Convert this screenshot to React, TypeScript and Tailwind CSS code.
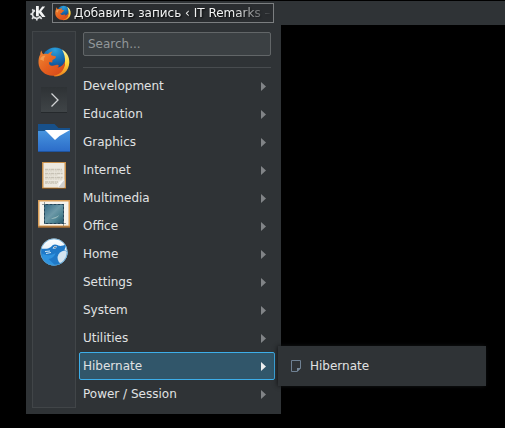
import React from "react";

const categories: string[] = [
  "Development",
  "Education",
  "Graphics",
  "Internet",
  "Multimedia",
  "Office",
  "Home",
  "Settings",
  "System",
  "Utilities",
  "Hibernate",
  "Power / Session",
];

function KdeLogo() {
  return (
    <svg viewBox="0 0 16 16" className="size-4" aria-hidden="true">
      <path d="M5 5.300A4.200 4.200 0 1 0 10.200 11.300" fill="none" stroke="#dfe1e2" strokeWidth="1.800" />
      <path d="M3.600 5.800L2.200 4.400M2.600 9.200H.4M3.600 12.200L2 13.800M6.800 13v2.500M10 12.200l1.700 1.700" stroke="#dfe1e2" strokeWidth="1.700" />
      <path d="M6 1h2.800v5l3.400-4.500h3L11.200 6.300l4.300 5.700h-3.300L8.800 7.500v3.700H6z" fill="#f4f5f5" />
    </svg>
  );
}

function Firefox({ className, id }: { className: string; id: string }) {
  return (
    <svg viewBox="0 0 32 32" className={className} aria-hidden="true">
      <defs>
        <radialGradient id={`${id}-globe`} cx="0.5" cy="0.1" r="0.9">
          <stop offset="0" stopColor="#2ba0dc" />
          <stop offset="0.5" stopColor="#1467ad" />
          <stop offset="1" stopColor="#10346f" />
        </radialGradient>
        <linearGradient id={`${id}-fox`} x1="0" y1="0" x2="1" y2="1">
          <stop offset="0" stopColor="#f08a35" />
          <stop offset="0.5" stopColor="#e5601f" />
          <stop offset="1" stopColor="#d4451b" />
        </linearGradient>
        <linearGradient id={`${id}-tail`} x1="0" y1="0" x2="0" y2="1">
          <stop offset="0" stopColor="#fff6a8" />
          <stop offset="0.5" stopColor="#ffd83c" />
          <stop offset="1" stopColor="#ee7f1c" />
        </linearGradient>
      </defs>
      <circle cx="17" cy="14.500" r="13" fill={`url(#${id}-globe)`} />
      <path d="M24 3.500c5 3 7.500 7.500 7.300 13C31 25 24.500 30.500 16.500 30.500l-2-3c8 0 12-5 12.500-11 .3-5-.500-8.500-3-13z" fill={`url(#${id}-tail)`} />
      <path d="M3.500 4.500c.2 1.500.8 3 1.800 3.800 1.500-.6 3-.6 4.700-.2 1.300-1.700 3-2.600 5-2.700-1.400 1-2 2.300-1.900 3.700.8.900 2.800.9 4.900 1.300.3 1.600-1.700 2.300-3.500 3.700l-.2 2.400-3-.6c-.8 2 .7 4 3.500 3.900 2.200-.1 3.200-1.600 5.400-.8 1.200.5.300 1.800-.8 2.500 4.100-.5 6.600-3.500 7.600-6.500.5 8-4 13.500-11 14.800C8 30.500.8 24.500.5 17 .4 13 1 10.500 2.300 8.500c0-1.400.4-3 1.200-4z" fill={`url(#${id}-fox)`} />
      <path d="M2 13.500c1-3.300 3-4.200 5.500-3.700-1.400 1.400-2 3.300-1.700 5.400-1.400-.9-2.500-1.400-3.800-1.700z" fill="#f29d52" />
    </svg>
  );
}

function Terminal() {
  return (
    <svg viewBox="0 0 32 32" className="size-8" aria-hidden="true">
      <defs>
        <linearGradient id="term" x1="0" y1="0" x2="0" y2="1">
          <stop offset="0" stopColor="#2e3235" />
          <stop offset="1" stopColor="#404548" />
        </linearGradient>
      </defs>
      <rect x="3" y="3" width="26" height="26" fill="url(#term)" />
      <path d="M3 28.500h26" stroke="#25292c" />
      <path d="M13.500 9.500l6.500 6.500-6.500 6.500" fill="none" stroke="#d2d4d5" strokeWidth="1.300" />
    </svg>
  );
}

function Folder() {
  return (
    <svg viewBox="0 0 32 32" className="size-8" aria-hidden="true">
      <defs>
        <linearGradient id="folder" x1="0" y1="0" x2="0" y2="1">
          <stop offset="0" stopColor="#4896e0" />
          <stop offset="1" stopColor="#2b6bc8" />
        </linearGradient>
      </defs>
      <path d="M0 2h16.500l4 4H32v11H0z" fill="#17508a" />
      <path d="M0 9h6.500l1-1H32v22H0z" fill="url(#folder)" />
      <path d="M0 29.500h32" stroke="#1f55a1" />
      <path d="M7 8h25l-10.500 6-4.500 4z" fill="#fff" />
    </svg>
  );
}

function Note() {
  return (
    <svg viewBox="0 0 32 32" className="size-8" aria-hidden="true">
      <rect x="4" y="2" width="24" height="27" fill="#c9914c" />
      <rect x="5.500" y="3" width="21" height="24.500" fill="#ece8df" />
      <path d="M4 28.500h24" stroke="#795225" />
      <path d="M7 9.500h17M7 13.500h18M7 17.500h18M7 22h13" stroke="#c7c2b5" strokeWidth="1.300" strokeDasharray="3 .6 2 .4" />
      <path d="M7 11h18M7 15h13M7 19h17M7 23.500h12" stroke="#d2cdc0" strokeDasharray="2 .5" />
      <path d="M20 27.500l6.500-8v8z" fill="#d0d0cf" />
      <path d="M20 27.500l1-5.500 5.500-2.500z" fill="#f8f8f7" />
    </svg>
  );
}

function Picture() {
  return (
    <svg viewBox="0 0 32 32" className="size-8" aria-hidden="true">
      <defs>
        <linearGradient id="photo" x1="0" y1="0" x2="1" y2="1">
          <stop offset="0" stopColor="#376b85" />
          <stop offset="0.450" stopColor="#6d99a8" />
          <stop offset="0.700" stopColor="#4e8493" />
          <stop offset="1" stopColor="#28576c" />
        </linearGradient>
      </defs>
      <rect y="2" width="32" height="27.500" fill="#dba05a" />
      <rect x="1.500" y="3.500" width="29" height="24" fill="#f5f3ee" />
      <path d="M0 29h32" stroke="#8c5926" />
      <rect x="6.500" y="6.500" width="19" height="19" fill="url(#photo)" stroke="#24475a" />
      <rect x="6.500" y="6.500" width="19" height="19" fill="none" stroke="#6e8791" strokeDasharray="1 3" />
      <path d="M4 6.500h2M6.500 4v2M25.500 26v2M26 25.500h2" stroke="#6b7375" strokeWidth=".7" />
      <path d="M13 21c3 0 7-1 8-4-2 2-5 2-8 4z" fill="#a8c6c5" opacity=".8" />
    </svg>
  );
}

function BlueBird() {
  return (
    <svg viewBox="0 0 32 32" className="size-8" aria-hidden="true">
      <defs>
        <linearGradient id="bird-sky" x1="0" y1="0" x2="0" y2="1">
          <stop offset="0" stopColor="#fff" />
          <stop offset="1" stopColor="#c6def0" />
        </linearGradient>
        <clipPath id="bird-clip"><circle cx="16" cy="16" r="13.500" /></clipPath>
      </defs>
      <circle cx="16" cy="16" r="13.500" fill="url(#bird-sky)" />
      <g clipPath="url(#bird-clip)">
        <path d="M2 12c4 1.500 8 1 11-1 1-1.500 2-2.500 4-2.500 2 .2 3 .8 4 1.300 2 .5 5-.5 7-1.300-.3 2.500-1 4-1.500 5.500l5 3-3 13H14C7 29 2 22 2 12z" fill="#2079c7" />
        <path d="M4.500 17.500c4 2.500 9 2 13-.5-1 4-4 5.500-7 6l8 7.500C7 31 3 25 4.500 17.500z" fill="#2f93df" />
        <path d="M19.500 21c1-4 3.500-6 7-6.500l4 2-2 7-5 4.500c-2.500-1-4-3.500-4-7z" fill="#d3e3ef" />
        <path d="M2 20l6 9-6-1z" fill="#3ea3e8" />
        <path d="M7 15.500l5-.5M8 17.500l5-1" stroke="#cfe6f6" />
        <path d="M14.500 12.500l2-2.500 2.500.500-1.500 2z" fill="#fff" />
      </g>
      <circle cx="17" cy="11.300" r=".8" fill="#20445e" />
      <circle cx="16" cy="16" r="13.200" fill="none" stroke="#4c9ccf" strokeWidth=".7" />
    </svg>
  );
}

const favorites = [
  { name: "Firefox", icon: <Firefox className="size-8" id="fav" /> },
  { name: "Terminal", icon: <Terminal /> },
  { name: "Files", icon: <Folder /> },
  { name: "Notes", icon: <Note /> },
  { name: "Image viewer", icon: <Picture /> },
  { name: "Browser", icon: <BlueBird /> },
];

function Submenu() {
  return (
    <div className="absolute left-full -top-1.5 z-10 ml-[3px] w-52 bg-[#2f3336] py-1.5 shadow-[-1px_0_4px_#17191b]">
      <button className="flex h-7 w-full items-center gap-2 px-3 text-left">
        <svg viewBox="0 0 12 12" className="size-3" aria-hidden="true">
          <path d="M1.500.5h9v7.500l-3.500 3.500H1.500z" fill="none" stroke="#6f8193" />
          <path d="M7 12V8h4z" fill="#77899b" />
        </svg>
        Hibernate
      </button>
    </div>
  );
}

export default function App() {
  return (
    <div className="min-h-screen bg-black pt-px pl-[26px] font-['DejaVu_Sans',sans-serif] text-xs text-[#e0e2e3]">
      <header className="flex h-6 items-center gap-1.5 bg-[#2f3336] pl-1">
        <button aria-label="Application launcher">
          <KdeLogo />
        </button>
        <button className="flex h-5 w-[222px] items-center gap-[3px] border border-[#7b7e80] bg-[#2a2d30] pl-0.5">
          <Firefox className="size-4 shrink-0" id="task" />
          <span className="flex-1 mask-r-from-80% mask-r-to-100% text-left whitespace-nowrap text-[#f2f3f3] text-shadow-[1px_1px_2px_#000]">
            Добавить запись ‹ IT Remarks –
          </span>
        </button>
      </header>
      <main className="flex w-[255px] gap-[3px] bg-[#2f3336] p-1.5">
        <nav aria-label="Favorites" className="flex w-11 flex-col items-center gap-1.5 border border-[#414548] bg-[#33373b] pt-3.5">
          {favorites.map((f) => (
            <button key={f.name} aria-label={f.name}>
              {f.icon}
            </button>
          ))}
        </nav>
        <div className="min-w-0 flex-1">
          <div className="mr-1 ml-1 pt-px">
            <input
              type="text"
              aria-label="Search"
              placeholder="Search..."
              className="block h-6 w-full rounded-xs border border-[#626668] bg-[#3b4043] px-1 placeholder:text-[#92979a]"
            />
            <hr className="mt-[11px] mb-1 border-[#484c4f]" />
          </div>
          <ul>
            {categories.map((c) => {
              const active = c === "Hibernate";
              return (
                <li key={c} className="relative">
                  <button
                    className={
                      active
                        ? "flex h-7 w-full items-center justify-between rounded-xs border border-[#3daee9] bg-[#31566a] pr-2 pl-[3px] text-left"
                        : "flex h-7 w-full items-center justify-between border border-transparent pr-2 pl-[3px] text-left"
                    }
                  >
                    {c}
                    <svg viewBox="0 0 5 9" className="h-[9px] w-[5px]" aria-hidden="true">
                      <path d="M0 0l5 4.500-5 4.500z" fill={active ? "#eceeef" : "#818487"} />
                    </svg>
                  </button>
                  {active && <Submenu />}
                </li>
              );
            })}
          </ul>
        </div>
      </main>
    </div>
  );
}
